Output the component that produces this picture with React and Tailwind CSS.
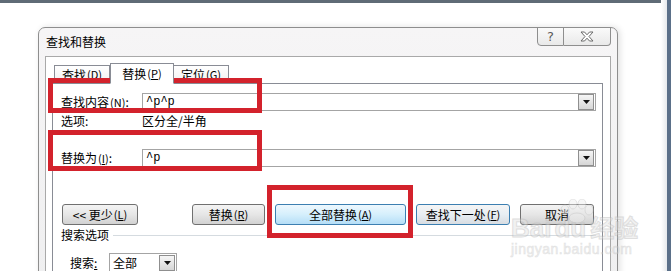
import React from 'react';

const cjk = "font-['Noto_Sans_CJK_SC','Noto_Sans_CJK_JP',sans-serif]";

const Key = ({ k }) => (
  <span className="ml-px text-[11px]">
    (<span className="underline">{k}</span>)
  </span>
);

const DropArrow = () => (
  <div className="flex h-[16px] w-[16px] items-center justify-center border border-[#8f8f8f] bg-gradient-to-b from-[#f6f6f6] to-[#d6d6d6]">
    <svg width="7" height="4" viewBox="0 0 7 4">
      <path d="M0 0 H7 L3.5 4 Z" fill="#111" />
    </svg>
  </div>
);

const Button = ({ children, className = '', tone = 'gray' }) => {
  const tones = {
    gray: 'border-[#707070] from-[#f4f4f4] via-[#e6e6e6] to-[#d2d2d2]',
    hover: 'border-[#3c7fb1] from-[#eef8fe] via-[#d5effc] to-[#b5def7]',
    focus: 'border-[#3c7fb1] from-[#f5f5f5] via-[#e8eef3] to-[#d8dde2]',
  };
  return (
    <div
      className={`flex h-[21px] items-center justify-center rounded-[3px] border bg-gradient-to-b text-[12px] leading-none text-black ${tones[tone]} ${className}`}
    >
      {children}
    </div>
  );
};

const Tab = ({ label, k, active, className = '' }) => (
  <div
    className={`flex items-center justify-center border border-[#898c95] text-[12px] leading-none ${
      active
        ? 'relative z-10 -mb-px h-[21px] border-b-white bg-white'
        : 'mt-[2px] h-[18px] border-b-0 bg-gradient-to-b from-white to-[#f0f0f0]'
    } ${className}`}
  >
    {label}
    <Key k={k} />
  </div>
);

const RedBox = ({ className }) => (
  <div className={`pointer-events-none absolute border-[5px] border-[#d3222c] ${className}`} />
);

export default function App() {
  return (
    <div className={`relative h-[271px] w-[671px] overflow-hidden bg-white text-black ${cjk}`}>
      <div className="h-[3px] bg-[#5f6b76]" />
      <div className="absolute right-0 top-0 h-full w-[4px] bg-[#5b7089]" />
      <div className="absolute right-[4px] top-0 h-full w-[6px] bg-gradient-to-l from-[#e6e9ec] to-white" />

      {/* dialog window */}
      <div className="absolute left-[38px] top-[27px] h-[260px] w-[580px] rounded-t-[7px] border border-[#8e8e8e] bg-gradient-to-b from-[#f6f5f6] to-[#efeff0] px-[6px] shadow-[2px_0_6px_rgba(0,0,0,0.12)]">
        <div className="flex h-[28px] items-center pl-[1px] text-[12px] leading-none">查找和替换</div>

        <div className="absolute -top-px right-[6px] flex h-[19px]">
          <div className="flex w-[27px] items-center justify-center rounded-bl-[4px] border border-[#8e8e8e] bg-gradient-to-b from-[#fafafa] to-[#e9e9e9] font-['DejaVu_Sans',sans-serif] text-[13px] leading-none text-[#5a5a5a]">
            ?
          </div>
          <div className="flex w-[47px] items-center justify-center rounded-br-[4px] border border-l-0 border-[#8e8e8e] bg-gradient-to-b from-[#fafafa] to-[#e9e9e9]">
            <svg width="14" height="11" viewBox="0 0 14 11">
              <polygon
                points="1,1 4.5,1 7,3.8 9.5,1 13,1 9,5.5 13,10 9.5,10 7,7.2 4.5,10 1,10 5,5.5"
                fill="#fff"
                stroke="#6b6b6b"
                strokeWidth="1"
              />
            </svg>
          </div>
        </div>

        {/* client area */}
        <div className="h-[240px] border border-[#a9a9a9] bg-white pl-[6px] pr-[7px] pt-[6px]">
          <div className="flex pl-[2px]">
            <Tab label="查找" k="D" className="w-[56px]" />
            <Tab label="替换" k="P" active className="w-[64px]" />
            <Tab label="定位" k="G" className="-ml-px w-[56px]" />
          </div>

          <div className="h-[220px] border border-[#898c95] bg-white pl-[8px] pr-[6px] pt-[9px] text-[12px] leading-none">
            <div className="flex h-[18px] items-center">
              <div className="w-[81px]">
                查找内容<Key k="N" />:
              </div>
              <div className="flex h-[18px] flex-1 items-center justify-between border border-[#a4a4a4] pl-[3px] pr-px">
                <span className="font-['Liberation_Mono',monospace] text-[12px]">^p^p</span>
                <DropArrow />
              </div>
            </div>

            <div className="flex h-[20px] items-center">
              <div className="w-[81px]">选项:</div>
              <div>区分全/半角</div>
            </div>

            <div className="mt-[18px] flex h-[18px] items-center">
              <div className="w-[81px]">
                替换为<Key k="I" />:
              </div>
              <div className="flex h-[18px] flex-1 items-center justify-between border border-[#a4a4a4] pl-[3px] pr-px">
                <span className="font-['Liberation_Mono',monospace] text-[12px]">^p</span>
                <DropArrow />
              </div>
            </div>

            <div className="mt-[37px] flex">
              <Button className="ml-px w-[76px]">
                &lt;&lt; 更少<Key k="L" />
              </Button>
              <Button className="ml-[54px] w-[73px]">
                替换<Key k="R" />
              </Button>
              <Button tone="hover" className="ml-[10px] w-[131px]">
                全部替换<Key k="A" />
              </Button>
              <Button tone="focus" className="ml-[10px] w-[94px]">
                查找下一处<Key k="F" />
              </Button>
              <Button className="ml-[10px] w-[74px]">取消</Button>
            </div>

            <div className="mt-[2px] flex h-[16px] items-center">
              <span>搜索选项</span>
              <div className="ml-[4px] h-px flex-1 bg-[#d5dbe0]" />
            </div>

            <div className="mt-[10px] flex h-[20px] items-center pl-[9px]">
              <div className="w-[39px]">
                搜索<span className="underline">:</span>
              </div>
              <div className="flex h-[20px] w-[68px] items-center justify-between border border-[#a4a4a4] pl-[3px] pr-px">
                <span>全部</span>
                <DropArrow />
              </div>
            </div>
          </div>
        </div>
      </div>

      {/* annotation boxes */}
      <RedBox className="left-[48px] top-[78px] h-[35px] w-[214px]" />
      <RedBox className="left-[48px] top-[130px] h-[41px] w-[214px]" />
      <RedBox className="left-[267px] top-[185px] h-[53px] w-[146px]" />

      {/* watermark */}
      <div className="pointer-events-none absolute left-[511px] top-[203px] flex flex-col items-start opacity-45">
        <svg className="absolute left-[48px] top-[-4px]" width="36" height="24" viewBox="0 0 36 24">
          <g fill="#eeeeee" stroke="#c4c4c4" strokeWidth="1">
            <ellipse cx="6" cy="11" rx="4" ry="5" />
            <ellipse cx="14" cy="5" rx="4" ry="5" />
            <ellipse cx="23" cy="5" rx="4" ry="5" />
            <ellipse cx="30" cy="11" rx="4" ry="5" />
            <ellipse cx="18" cy="19" rx="8" ry="5" />
          </g>
        </svg>
        <div className="relative mt-[12px] flex items-baseline font-['Liberation_Sans',sans-serif] text-[26px] font-bold leading-none text-[#e2e2e2] [-webkit-text-stroke:1px_#b8b8b8]">
          <span>Bai</span>
          <span className="ml-[3px]">du</span>
          <span className={`ml-[4px] text-[24px] ${cjk}`}>经验</span>
        </div>
        <div className="mt-[1px] font-['Liberation_Sans',sans-serif] text-[14px] leading-none tracking-[0.5px] text-[#dadada] [-webkit-text-stroke:0.5px_#bdbdbd]">
          jingyan.baidu.com
        </div>
      </div>
    </div>
  );
}
